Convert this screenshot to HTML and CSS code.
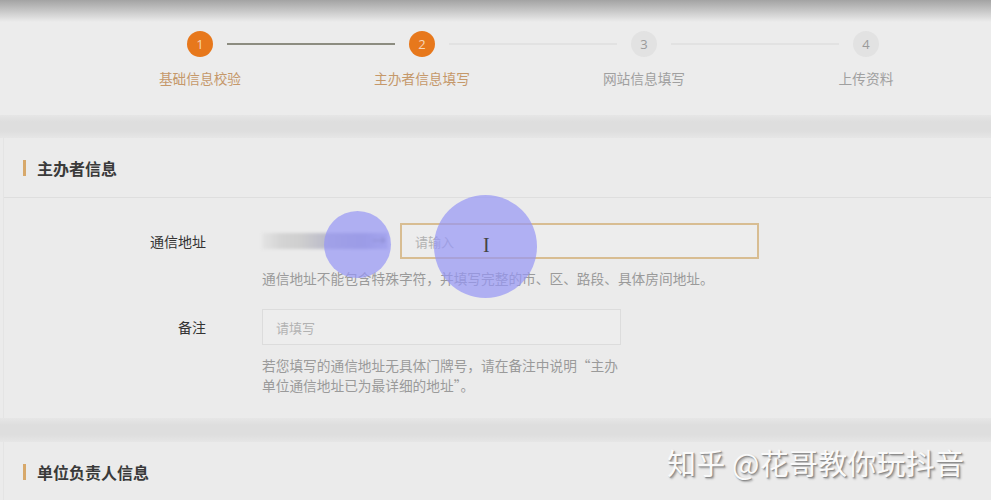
FILE: index.html
```html
<!DOCTYPE html>
<html lang="zh-CN">
<head>
<meta charset="utf-8">
<link rel="stylesheet" href="styles.css">
</head>
<body>
<div class="shade"></div>
<section class="steps">
  <div class="track">
    <span class="dot on">1</span>
    <span class="line done"></span>
    <span class="dot on">2</span>
    <span class="line"></span>
    <span class="dot">3</span>
    <span class="line"></span>
    <span class="dot">4</span>
  </div>
  <div class="labels">
    <span class="lab on">基础信息校验</span>
    <span class="lab on">主办者信息填写</span>
    <span class="lab">网站信息填写</span>
    <span class="lab">上传资料</span>
  </div>
</section>
<div class="strip"></div>
<section class="panel">
  <h2 class="head">主办者信息</h2>
  <div class="body">
    <div class="row">
      <label class="label">通信地址</label>
      <div class="field">
        <div class="line-inputs">
          <div class="blurred"><span class="arrow">→</span></div>
          <div class="input focus"><span class="ph">请输入</span></div>
        </div>
        <p class="hint">通信地址不能包含特殊字符，并填写完整的市、区、路段、具体房间地址。</p>
      </div>
    </div>
    <div class="row">
      <label class="label">备注</label>
      <div class="field">
        <div class="input small"><span class="ph">请填写</span></div>
        <p class="hint narrow">若您填写的通信地址无具体门牌号，请在备注中说明“主办单位通信地址已为最详细的地址”。</p>
      </div>
    </div>
  </div>
</section>
<div class="strip s2"></div>
<section class="panel">
  <h2 class="head">单位负责人信息</h2>
</section>
<div class="touch t1"></div>
<div class="touch t2"></div>
<div class="cursor">I</div>
<div class="mark">知乎 @花哥教你玩抖音</div>
</body>
</html>
```
FILE: styles.css
```css
* { box-sizing: border-box; }
html, body { margin: 0; padding: 0; }
body {
  width: 991px;
  height: 500px;
  overflow: hidden;
  background: #ebebeb;
  font-family: "Noto Sans CJK SC", "Noto Sans", sans-serif;
  color: #333;
  position: relative;
}
.shade {
  position: absolute;
  left: 0; top: 0; right: 0;
  height: 22px;
  background: linear-gradient(#a3a3a3, rgba(235,235,235,0));
  z-index: 2;
}
.steps {
  height: 115px;
  background: #ececec;
  padding-top: 31px;
}
.track {
  display: flex;
  align-items: center;
  gap: 14px;
  margin-left: 187px;
  width: 692px;
}
.dot {
  width: 26px; height: 26px;
  border-radius: 50%;
  background: #e2e2e2;
  color: #9a9a9a;
  font-size: 13px;
  font-family: "Open Sans", sans-serif;
  display: flex; align-items: center; justify-content: center;
  flex: none;
}
.dot.on { background: #e7781c; color: #f6d6b8; }
.line { flex: 1; height: 2px; background: #e2e2e2; }
.line.done { background: #8c8c80; }
.labels {
  display: grid;
  grid-template-columns: repeat(4, 222px);
  margin-left: 89px;
  margin-top: 11px;
}
.lab {
  text-align: center;
  font-size: 13.7px;
  color: #a0a0a0;
}
.lab.on { color: #c5986a; }
.strip {
  height: 23px;
  background: linear-gradient(#e6e6e6, #dedede 30%, #dedede 70%, #e6e6e6);
}
.strip.s2 { height: 24px; }
.panel {
  background: #ebebeb;
  margin-left: 3px;
  border-left: 1px solid #e4e4e4;
}
.head {
  margin: 0;
  height: 60px;
  display: flex;
  align-items: center;
  padding-left: 19px;
  font-size: 16px;
  font-weight: bold;
  color: #3a3a3a;
  border-bottom: 1px solid #dedede;
}
.head::before {
  content: "";
  width: 3px; height: 16px;
  background: #d7a86a;
  margin-right: 11px;
}
.body { padding: 25px 0 23px; }
.row { display: flex; }
.row + .row { margin-top: 21px; }
.label {
  width: 202px;
  flex: none;
  text-align: right;
  font-size: 14px;
  color: #333;
  height: 36px;
  line-height: 36px;
}
.field { margin-left: 56px; }
.line-inputs { display: flex; align-items: center; gap: 12px; }
.blurred {
  width: 126px; height: 16px;
  background: linear-gradient(90deg, #e4e4e4 0, #d4d4d4 15%, #cfcfcf 30%, #b8b8c8 55%, #a9a9c4 80%, #c4c4dc 100%);
  filter: blur(1.5px);
  position: relative;
}
.arrow { position: absolute; right: 2px; top: -4px; font-size: 14px; color: #777; }
.input {
  width: 359px; height: 36px;
  border: 1px solid #dcdcdc;
  background: #ededed;
  display: flex; align-items: center;
  padding-left: 13px;
}
.input.focus { width: 359px; border: 2px solid #d8bd92; }
.ph { font-size: 13px; color: #b2b2b2; }
.hint {
  margin: 9px 0 0;
  font-size: 13.7px;
  color: #9a9a9a;
  line-height: 20px;
}
.hint.narrow { width: 362px; margin-top: 10px; }
.touch {
  position: absolute;
  border-radius: 50%;
  background: rgba(150,150,245,0.7);
  z-index: 3;
}
.t1 { left: 324px; top: 211px; width: 67px; height: 67px; }
.t2 { left: 434px; top: 195px; width: 103px; height: 103px; }
.cursor {
  position: absolute;
  left: 483px; top: 234px;
  z-index: 4;
  font-family: "Liberation Serif", serif;
  font-size: 20px;
  color: #444;
}
.mark {
  position: absolute;
  left: 667px; top: 441px;
  font-size: 29px;
  color: #fafafa;
  text-shadow: 1px 1px 1px #888, 2px 2px 2px #aaa;
  z-index: 5;
  letter-spacing: 0.2px;
}
```
